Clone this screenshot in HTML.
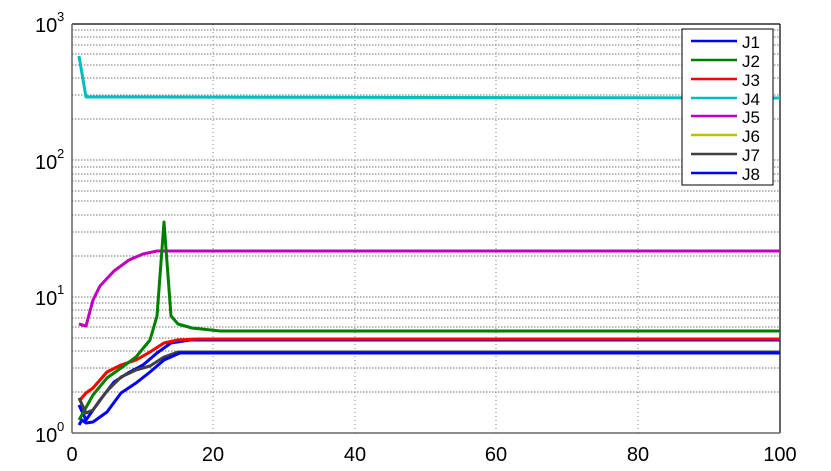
<!DOCTYPE html>
<html><head><style>
html,body{margin:0;padding:0;background:#fff;width:831px;height:471px;overflow:hidden}
svg{display:block}
text{font-family:"Liberation Sans",Arial,sans-serif;fill:#000}
</style></head><body>
<svg width="831" height="471" xmlns="http://www.w3.org/2000/svg">
<g stroke="#444" stroke-width="0.8" stroke-dasharray="1.5,1.5">
<line x1="72" x2="780" y1="392" y2="392"/><line x1="72" x2="780" y1="368" y2="368"/><line x1="72" x2="780" y1="351" y2="351"/><line x1="72" x2="780" y1="338" y2="338"/><line x1="72" x2="780" y1="327" y2="327"/><line x1="72" x2="780" y1="318" y2="318"/><line x1="72" x2="780" y1="310" y2="310"/><line x1="72" x2="780" y1="303" y2="303"/>
<line x1="72" x2="780" y1="297" y2="297"/>
<line x1="72" x2="780" y1="256" y2="256"/><line x1="72" x2="780" y1="232" y2="232"/><line x1="72" x2="780" y1="215" y2="215"/><line x1="72" x2="780" y1="201" y2="201"/><line x1="72" x2="780" y1="191" y2="191"/><line x1="72" x2="780" y1="181" y2="181"/><line x1="72" x2="780" y1="174" y2="174"/><line x1="72" x2="780" y1="167" y2="167"/>
<line x1="72" x2="780" y1="160" y2="160"/>
<line x1="72" x2="780" y1="119" y2="119"/><line x1="72" x2="780" y1="95" y2="95"/><line x1="72" x2="780" y1="78" y2="78"/><line x1="72" x2="780" y1="65" y2="65"/><line x1="72" x2="780" y1="54" y2="54"/><line x1="72" x2="780" y1="45" y2="45"/><line x1="72" x2="780" y1="37" y2="37"/><line x1="72" x2="780" y1="30" y2="30"/>
</g>
<g stroke="#666" stroke-width="0.8" stroke-dasharray="1,3">
<line x1="213" x2="213" y1="24" y2="433"/><line x1="355" x2="355" y1="24" y2="433"/><line x1="496" x2="496" y1="24" y2="433"/><line x1="638" x2="638" y1="24" y2="433"/>
</g>
<line x1="72" x2="780" y1="24" y2="24" stroke="#000" stroke-width="1.2"/>
<line x1="780" x2="780" y1="24" y2="433" stroke="#000" stroke-width="1.2"/>
<line x1="72" x2="780" y1="433" y2="433" stroke="#666" stroke-width="1.5"/>
<line x1="72" x2="72" y1="24" y2="433" stroke="#666" stroke-width="1.5"/>
<g fill="none" stroke-width="3" stroke-linejoin="round">
<polyline stroke="#00bfbf" points="79,56 86,97 93,97 780,98"/>
<polyline stroke="#bf00bf" points="79,324 86,326 93,300 100,286 114,271 129,260 143,254 157,251 780,251"/>
<polyline stroke="#bfbf00" points="80,400 86,393 93,388 107,372 121,365 136,360 150,352 164,343 178,340 199,339 780,339"/>
<polyline stroke="#0000ff" points="79,405 86,420 100,400 114,382 128,373 143,365 157,353 171,343 190,340 780,340"/>
<polyline stroke="#ff0000" points="80,400 86,393 93,388 107,372 121,365 136,360 150,352 164,343 178,340 199,339 780,339"/>
<polyline stroke="#007f00" points="79,420 93,395 107,378 121,368 136,357 150,340 157,316 164,222 171,316 178,324 192,328 220,331 780,331"/>
<polyline stroke="#404040" points="79,398 86,413 93,410 107,391 121,377 136,370 150,366 164,357 178,352 199,352 780,352"/>
<polyline stroke="#0000ff" points="79,425 82,420 86,423 93,422 107,412 121,393 136,383 150,372 164,360 180,353 199,353 780,353"/>
</g>
<rect x="682" y="29" width="91" height="156" fill="#fff" stroke="#000" stroke-width="1"/>
<g stroke-width="2.5">
<line x1="691" x2="737" y1="41" y2="41" stroke="#0000ff"/>
<line x1="691" x2="737" y1="60" y2="60" stroke="#007f00"/>
<line x1="691" x2="737" y1="79" y2="79" stroke="#ff0000"/>
<line x1="691" x2="737" y1="98" y2="98" stroke="#00bfbf"/>
<line x1="691" x2="737" y1="116" y2="116" stroke="#bf00bf"/>
<line x1="691" x2="737" y1="135" y2="135" stroke="#bfbf00"/>
<line x1="691" x2="737" y1="154" y2="154" stroke="#404040"/>
<line x1="691" x2="737" y1="173" y2="173" stroke="#0000ff"/>
</g>
<g font-size="17">
<text x="742" y="48">J1</text><text x="742" y="67">J2</text><text x="742" y="86">J3</text><text x="742" y="105">J4</text><text x="742" y="123">J5</text><text x="742" y="142">J6</text><text x="742" y="161">J7</text><text x="742" y="180">J8</text>
</g>
<g font-size="20" text-anchor="middle">
<text x="72" y="461">0</text><text x="213" y="461">20</text><text x="355" y="461">40</text><text x="496" y="461">60</text><text x="638" y="461">80</text><text x="780" y="461">100</text>
</g>
<g font-size="20">
<text x="35" y="32">10</text><text x="57" y="21" font-size="13">3</text>
<text x="35" y="169">10</text><text x="57" y="158" font-size="13">2</text>
<text x="35" y="305">10</text><text x="57" y="294" font-size="13">1</text>
<text x="35" y="442">10</text><text x="57" y="431" font-size="13">0</text>
</g>
</svg>
</body></html>
